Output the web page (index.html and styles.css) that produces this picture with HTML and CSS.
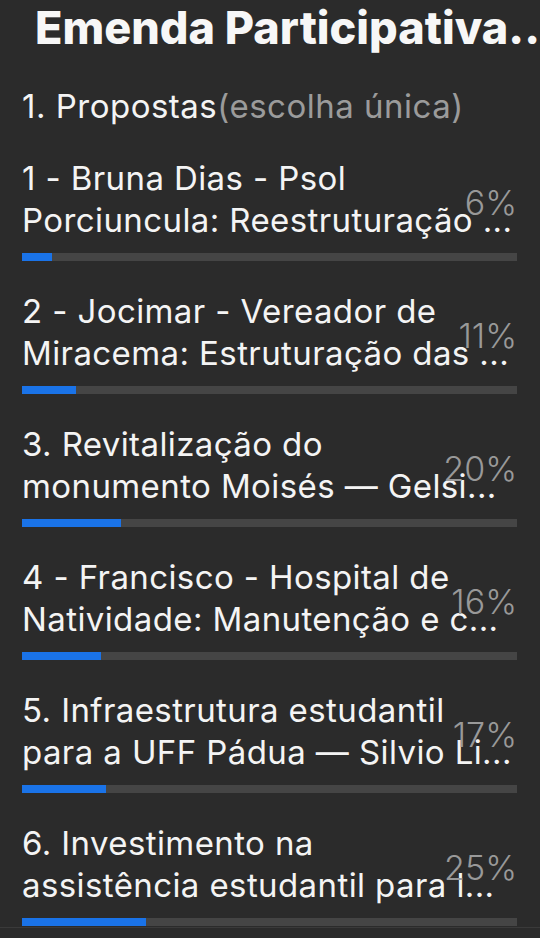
FILE: index.html
```html
<!DOCTYPE html>
<html lang="pt-BR">
<head>
<meta charset="utf-8">
<title>Emenda Participativa</title>
<link rel="stylesheet" href="styles.css">
</head>
<body>
<main class="poll">
  <h1 class="title">Emenda Participativa..</h1>
  <h2 class="question">1. Propostas<span class="hint">(escolha única)</span></h2>
  <ul class="options">
    <li class="option">
      <div class="label"><span class="line">1 - Bruna Dias - Psol</span><span class="line">Porciuncula: Reestruturação ...</span></div>
      <span class="pct">6%</span>
      <div class="track"><div class="fill" style="width:6%"></div></div>
    </li>
    <li class="option">
      <div class="label"><span class="line">2 - Jocimar - Vereador de</span><span class="line">Miracema: Estruturação das ...</span></div>
      <span class="pct">11%</span>
      <div class="track"><div class="fill" style="width:11%"></div></div>
    </li>
    <li class="option">
      <div class="label"><span class="line">3. Revitalização do</span><span class="line">monumento Moisés — Gelsi...</span></div>
      <span class="pct">20%</span>
      <div class="track"><div class="fill" style="width:20%"></div></div>
    </li>
    <li class="option">
      <div class="label"><span class="line">4 - Francisco - Hospital de</span><span class="line">Natividade: Manutenção e c...</span></div>
      <span class="pct">16%</span>
      <div class="track"><div class="fill" style="width:16%"></div></div>
    </li>
    <li class="option">
      <div class="label"><span class="line">5. Infraestrutura estudantil</span><span class="line">para a UFF Pádua — Silvio Li...</span></div>
      <span class="pct">17%</span>
      <div class="track"><div class="fill" style="width:17%"></div></div>
    </li>
    <li class="option">
      <div class="label"><span class="line">6. Investimento na</span><span class="line">assistência estudantil para l...</span></div>
      <span class="pct">25%</span>
      <div class="track"><div class="fill" style="width:25%"></div></div>
    </li>
  </ul>
  <div class="divider"></div>
</main>
</body>
</html>
```
FILE: styles.css
```css
html, body {
  margin: 0;
  padding: 0;
  background: #2b2b2b;
}
body {
  width: 540px;
  height: 938px;
  overflow: hidden;
  font-family: Inter, "Open Sans", sans-serif;
  color: #f4f4f4;
}
.poll {
  display: flex;
  flex-direction: column;
}
.title {
  margin: 0;
  padding: 0 0 0 35px;
  font-size: 45px;
  font-weight: 800;
  line-height: 56px;
  letter-spacing: 0;
  white-space: nowrap;
  color: #f7f7f7;
}
.question {
  margin: 29px 0 0 0;
  padding-left: 22px;
  font-size: 33px;
  font-weight: 400;
  line-height: 42px;
  letter-spacing: 0.5px;
  white-space: nowrap;
}
.hint {
  color: #9b9b9b;
}
.options {
  list-style: none;
  margin: 30px 0 0 0;
  padding: 0;
  display: flex;
  flex-direction: column;
  gap: 29px;
}
.option {
  position: relative;
  padding: 0 23px 0 22px;
}
.label {
  display: flex;
  flex-direction: column;
  font-size: 33px;
  line-height: 42px;
  letter-spacing: 0.4px;
}
.line {
  white-space: nowrap;
  overflow: hidden;
}
.pct {
  position: absolute;
  right: 23px;
  top: 29px;
  font-size: 34px;
  line-height: 34px;
  color: #999999;
  font-weight: 300;
}
.track {
  margin-top: 12px;
  height: 8px;
  background: #454545;
}
.fill {
  height: 100%;
  background: #1a73e8;
}
.divider {
  margin-top: 1px;
  height: 1px;
  background: #3a3a3a;
}
```
